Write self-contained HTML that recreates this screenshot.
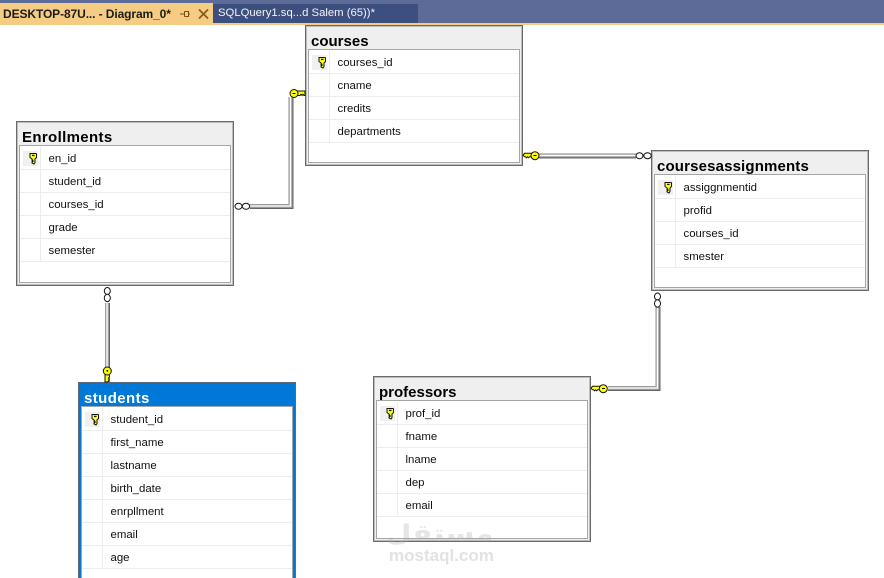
<!DOCTYPE html>
<html><head><meta charset="utf-8"><style>
html,body{margin:0;padding:0;width:884px;height:578px;overflow:hidden;background:#fff}
body{position:relative;font-family:"Liberation Sans",sans-serif}
.a{position:absolute}
.t{position:absolute;box-sizing:border-box;width:218px;background:#efefef;border:1px solid #6a6a6a;box-shadow:inset 0 0 0 1px #bdbdbd}
.t h2{position:absolute;left:5px;top:7px;margin:0;font-size:15px;line-height:18px;font-weight:bold;color:#000;white-space:nowrap}
.g{position:absolute;left:2px;right:2px;top:23px;bottom:2px;box-sizing:border-box;background:#fff;border:1px solid #a6a6a6;padding-top:1px}
.r{position:relative;box-sizing:border-box;height:23px;border-bottom:1px solid #ededed;font-size:11.4px;line-height:24px;color:#101010;padding-left:28.500px;white-space:nowrap}
.r:before{content:"";position:absolute;left:20px;top:0;bottom:-1px;width:1px;background:#ededed}
.r svg{position:absolute;left:3px;top:4px}
.b{background:#0078d7;border-color:#5a6a78;box-shadow:none;border-bottom:none}
.b h2{color:#fff}
.b .g{bottom:0;border-bottom:none}
svg.o{position:absolute;left:0;top:0;overflow:hidden}
</style></head><body>

<svg width="0" height="0" style="position:absolute"><defs>
<g id="pk"><rect width="15" height="15" fill="#f0f0f0"/><path d="M7 2.500h6l.5.5v3.500L12 8v3.500l-1 1.500-2-1v-1l1-.5-1-.7 1-.6-1-.7V8L7 6.500V3z" fill="#ffff1c" stroke="#111" stroke-width="1"/><rect x="9" y="3.800" width="2.500" height="1.300" fill="#111"/></g>
</defs></svg>

<div class="a" style="left:0;top:0;width:884px;height:24px;background:#5d6b99"></div>
<div class="a" style="left:0;top:23px;width:884px;height:2px;background:#f5cc84"></div>
<div class="a" style="left:0;top:3px;width:213px;height:21px;background:#f5cc84"></div>
<div class="a" style="left:213px;top:4px;width:205px;height:19px;background:#3d4f7f"></div>
<div class="a" style="left:3px;top:5px;font-size:12px;line-height:18px;font-weight:bold;color:#1c1c1c;white-space:nowrap;letter-spacing:-.1px">DESKTOP-87U... - Diagram_0*</div>
<div class="a" style="left:218px;top:4px;font-size:11.300px;line-height:18px;color:#f2f4fa;white-space:nowrap">SQLQuery1.sq...d Salem (65))*</div>
<svg class="o" width="884" height="30" style="z-index:1">
<path d="M180 14h4.500M184.500 11.500v5M184.500 11.500h4v5h-4M190 14h-1.500" fill="none" stroke="#7c4a14" stroke-width="1"/>
<path d="M199 9.500l9 9M208 9.500l-9 9" stroke="#8a5a20" stroke-width="1.800"/>
</svg>

<div class="t" style="left:305px;top:25px;height:141px"><h2>courses</h2><div class="g">
<div class="r"><svg width="15" height="15"><use href="#pk"/></svg>courses_id</div><div class="r">cname</div><div class="r">credits</div><div class="r">departments</div></div></div>

<div class="t" style="left:16px;top:121px;height:165px"><h2 style="letter-spacing:.35px">Enrollments</h2><div class="g">
<div class="r"><svg width="15" height="15"><use href="#pk"/></svg>en_id</div><div class="r">student_id</div><div class="r">courses_id</div><div class="r">grade</div><div class="r">semester</div></div></div>

<div class="t" style="left:651px;top:150px;height:141px"><h2 style="letter-spacing:.15px">coursesassignments</h2><div class="g">
<div class="r"><svg width="15" height="15"><use href="#pk"/></svg>assiggnmentid</div><div class="r">profid</div><div class="r">courses_id</div><div class="r">smester</div></div></div>

<div class="t" style="left:373px;top:376px;height:166px"><h2>professors</h2><div class="g">
<div class="r"><svg width="15" height="15"><use href="#pk"/></svg>prof_id</div><div class="r">fname</div><div class="r">lname</div><div class="r">dep</div><div class="r">email</div></div></div>

<div class="t b" style="left:78px;top:382px;height:196px"><h2 style="letter-spacing:.4px">students</h2><div class="g">
<div class="r"><svg width="15" height="15"><use href="#pk"/></svg>student_id</div><div class="r">first_name</div><div class="r">lastname</div><div class="r">birth_date</div><div class="r">enrpllment</div><div class="r">email</div><div class="r">age</div></div></div>

<svg class="o" width="884" height="578" style="z-index:2">
<g fill="none">
<path d="M250 206.500H291V97" stroke="#666" stroke-width="5"/>
<path d="M250 206H290.500V97" stroke="#aaa" stroke-width="3.600"/>
<path d="M250 206H290.500V97" stroke="#fff" stroke-width="1.300"/>
<ellipse cx="238.500" cy="206.300" rx="3.500" ry="3" fill="#fff" stroke="#111"/><ellipse cx="246" cy="206.300" rx="3.700" ry="3" fill="#fff" stroke="#111"/>

<path d="M107.500 303V368" stroke="#666" stroke-width="5"/><path d="M107 303V368" stroke="#aaa" stroke-width="3.600"/><path d="M107 303V368" stroke="#fff" stroke-width="1.300"/>
<ellipse cx="107.300" cy="291" rx="3" ry="3.500" fill="#fff" stroke="#111"/><ellipse cx="107.300" cy="298" rx="3" ry="3.700" fill="#fff" stroke="#111"/>

<path d="M539 156H636" stroke="#666" stroke-width="5"/><path d="M539 155.500H636" stroke="#aaa" stroke-width="3.600"/><path d="M539 155.500H636" stroke="#fff" stroke-width="1.300"/>
<ellipse cx="639.500" cy="155.700" rx="3.500" ry="3" fill="#fff" stroke="#111"/><ellipse cx="647.500" cy="155.700" rx="3.700" ry="3" fill="#fff" stroke="#111"/>

<path d="M608 388.500H658V307" stroke="#666" stroke-width="5"/><path d="M608 388H657.500V307" stroke="#aaa" stroke-width="3.600"/><path d="M608 388H657.500V307" stroke="#fff" stroke-width="1.300"/>
<ellipse cx="657.500" cy="296.500" rx="3" ry="3.500" fill="#fff" stroke="#111"/><ellipse cx="657.500" cy="303.500" rx="3" ry="3.700" fill="#fff" stroke="#111"/>
</g>
<g fill="#ffff00" stroke="#111" stroke-width="1">
<path d="M297 91h8v4.500h-1l-1-1.200-1 1.200-1-1.200-1 1.200h-3z"/><circle cx="294" cy="93.500" r="4"/>
<path d="M532 153.300h-7.500l-1.500 2 1.500 1.500h1l1 1 1-1 1 1 1-1h2.500z"/><circle cx="535" cy="155.700" r="4"/>
<path d="M600 386.300h-7.500l-1.500 2 1.500 1.500h1l1 1 1-1 1 1 1-1h2.500z"/><circle cx="603.300" cy="388.700" r="4"/>
<path d="M105 374v8h2.500l2-1-1-1 1-1-1-1 1-1-.5-3z"/><circle cx="107.300" cy="371" r="4"/>
</g>
<g fill="#111"><rect x="292.500" y="93" width="3" height="1"/><rect x="533.500" y="155" width="3" height="1"/><rect x="602" y="388" width="3" height="1"/><rect x="106.500" y="370" width="1.600" height="1.600"/></g>
</svg>

<div class="a" style="left:386px;top:511px;width:112px;text-align:center;z-index:3;font-family:'DejaVu Sans',sans-serif;font-weight:bold;font-size:32px;line-height:44px;color:rgba(175,175,175,.32);direction:rtl;white-space:nowrap;transform:scale(.92,.72)">مستقل</div>
<div class="a" style="left:389px;top:546px;z-index:3;font-size:17px;line-height:20px;font-weight:bold;color:#e2e2e2;white-space:nowrap">mostaql.com</div>
</body></html>
